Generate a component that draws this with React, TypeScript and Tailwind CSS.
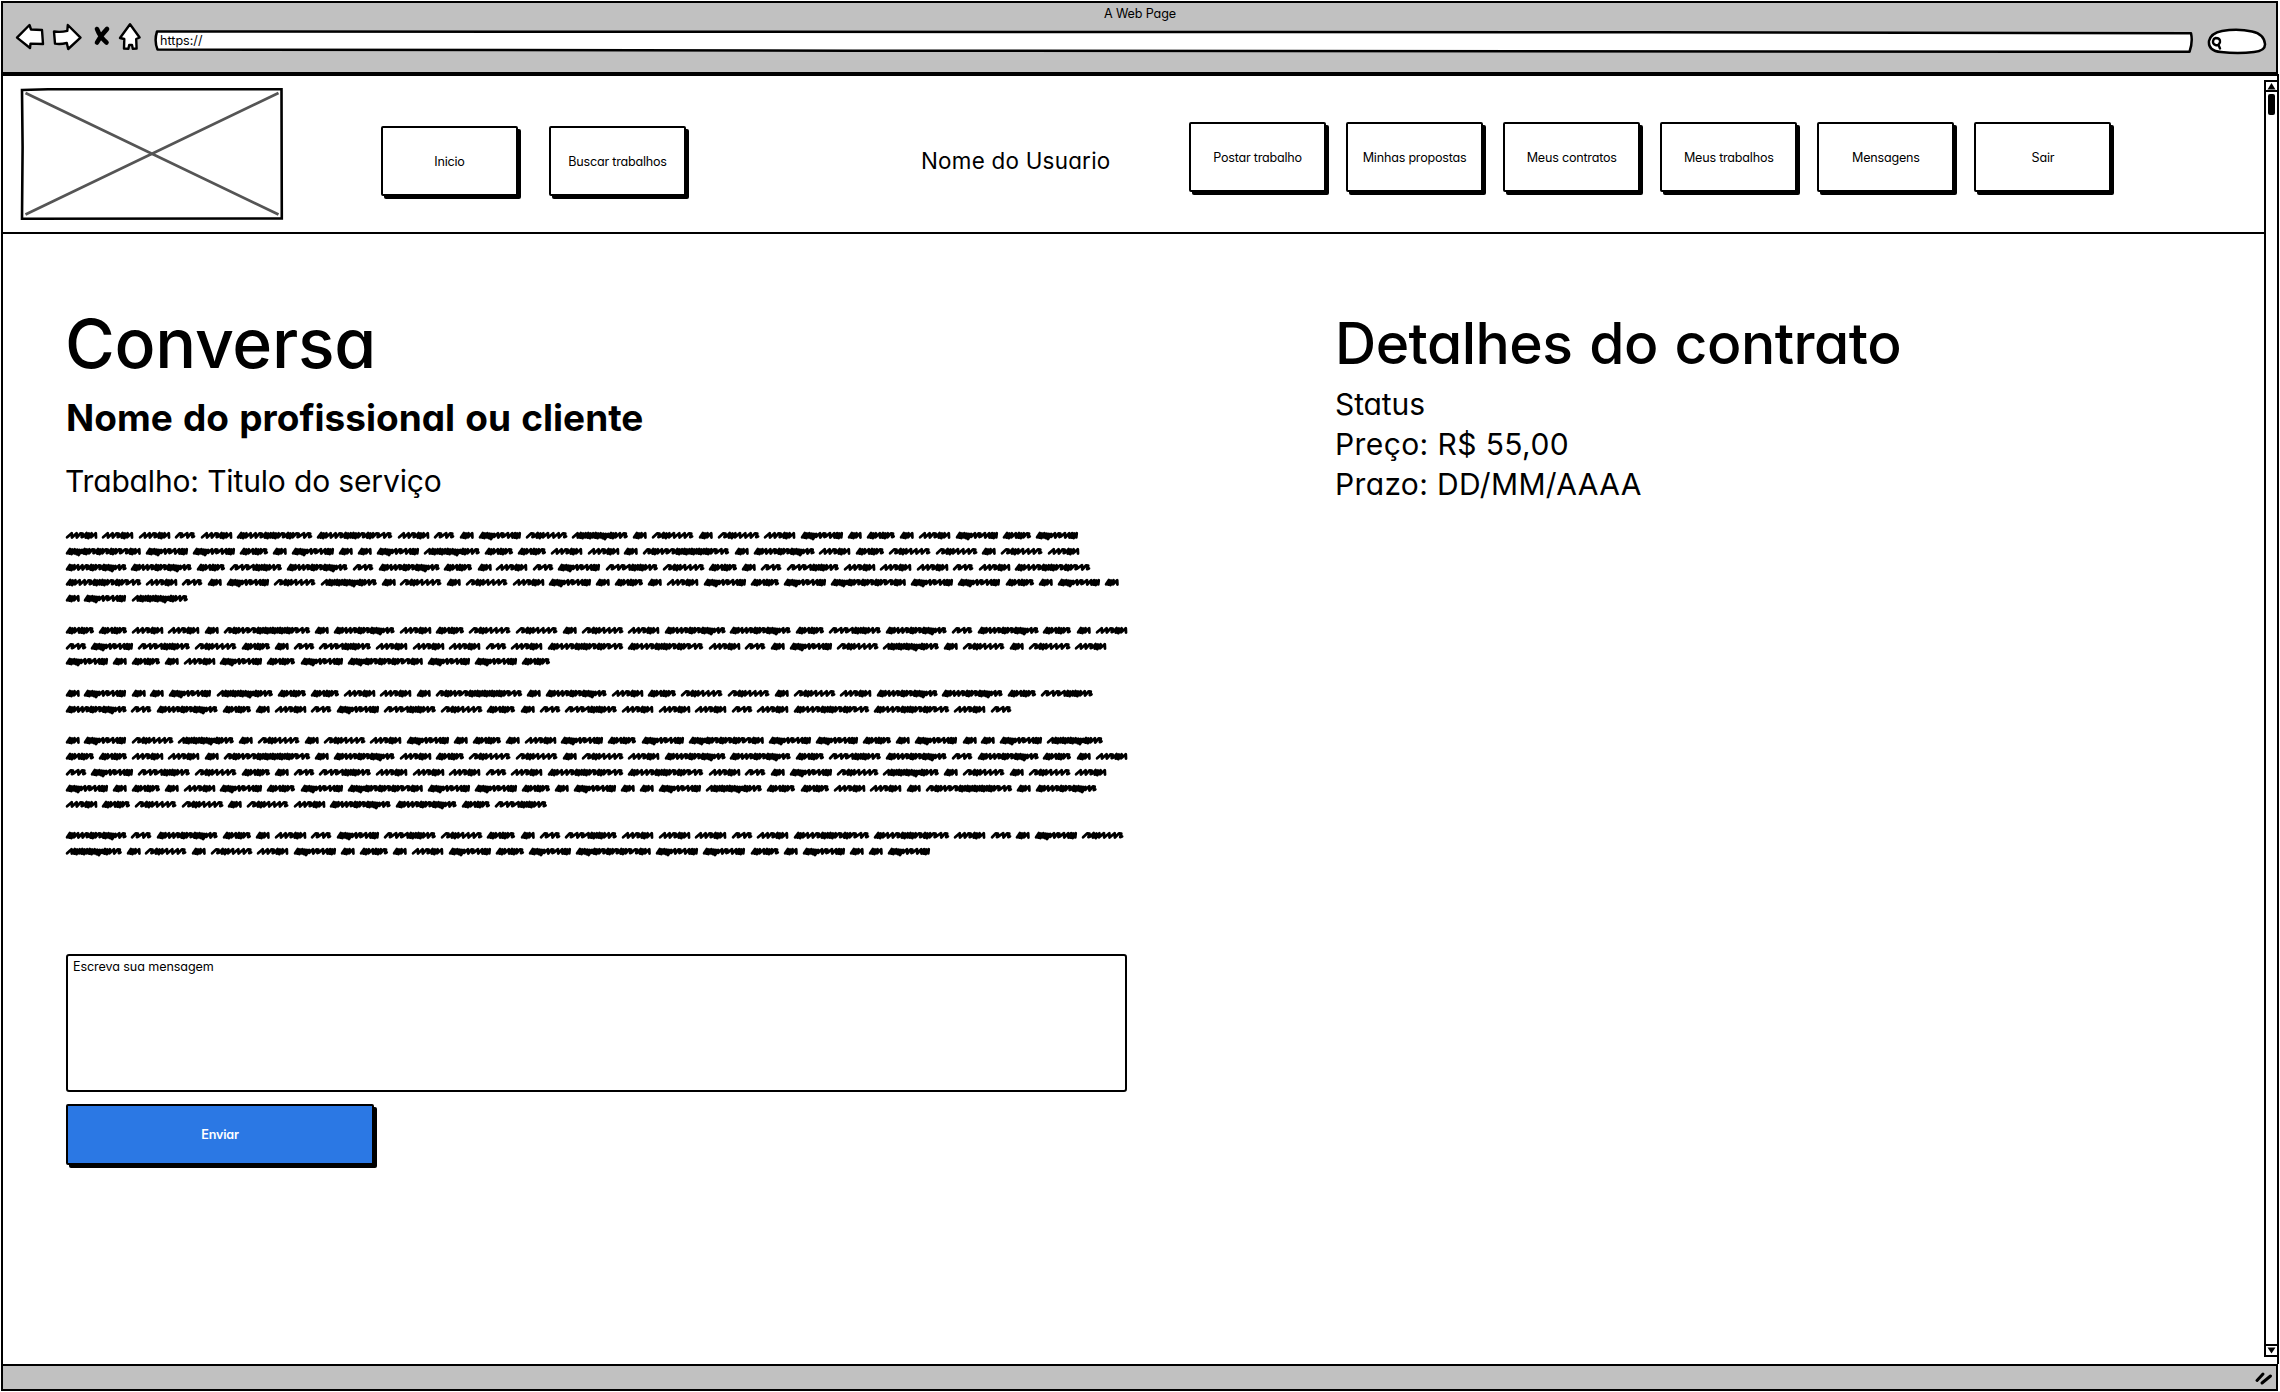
type WordKind = "A" | "B" | "C" | "D" | "E" | "F" | "G" | "H" | "I" | "J" | "K" | "L";

/* Each scribbled word: its ink width and the pen strokes that make it up. */
const WORDS: Record<WordKind, { width: number; strokes: string }> = {
  A: { width: 13.9, strokes: "ui" },
  B: { width: 20.5, strokes: "rir" },
  C: { width: 28.2, strokes: "uiur" },
  D: { width: 31.5, strokes: "iirui" },
  E: { width: 42.2, strokes: "uqiriiu" },
  F: { width: 41.6, strokes: "ruiiir" },
  G: { width: 52, strokes: "ririuuir" },
  H: { width: 56, strokes: "iuuuquir" },
  I: { width: 60.8, strokes: "uiiruruqir" },
  J: { width: 75.4, strokes: "uiiruururir" },
  K: { width: 75, strokes: "uqurururrui" },
  L: { width: 86.3, strokes: "ruirruuuuurir" },
};

const PARAGRAPHS: string[][] = [
  ["DDDBDJJDBAEFHAFAFDEACADECE", "KEECAEAAEHCCDDALAIDCFFAFD", "IICGIBICADBEGFCABGDDDBDJ", "JDBAEFHAFAFDEACADECEKEECAEA", "AEH"],
  ["CCDDALAIDCFFAFDIICGIBICAD", "BEGFCABGDDDBDJJDBAEFHAFAFD", "EACADECEKEEC"],
  ["AEAAEHCCDDALAIDCFFAFDIICG", "IBICADBEGFCABGDDDBDJJDB"],
  ["AEFHAFAFDEACADECEKEECAEAAEH", "CCDDALAIDCFFAFDIICGIBICAD", "BEGFCABGDDDBDJJDBAEFHAFAFD", "EACADECEKEECAEAAEHCCDDALAI", "DCFFAFDIICG"],
  ["IBICADBEGFCABGDDDBDJJDBAEF", "HAFAFDEACADECEKEECAEAAE"],
];

const STROKES: Record<string, [number, number][]> = {
  i: [[3.8, -2.3], [0.2, 2]],
  u: [[2.6, -2.4], [-0.6, 2.2], [2.6, -1.9], [-0.6, 2.6], [2.8, -2.2], [-0.4, 1.8]],
  q: [[2.6, -1.8], [-0.6, 2.6], [2.6, -1.6], [-0.8, 3.6], [3, -1.6], [-0.2, 1.4]],
  r: [[3.2, -2.2], [1.6, -1.8], [-0.8, 1.6], [1.4, 0.9]],
};

function scribblePath(kind: WordKind) {
  const { width, strokes } = WORDS[kind];
  let x = 0;
  const points: [number, number][] = [[0, 1.8]];
  for (const s of strokes) for (const [dx, y] of STROKES[s]) points.push([(x += dx), y]);
  const k = (width - 2.6) / Math.max(...points.map((p) => p[0]));
  return "M" + points.map(([px, py]) => `${(1.1 + px * k).toFixed(2)} ${(7.5 + py).toFixed(2)}`).join("L");
}

const PATHS = Object.fromEntries((Object.keys(WORDS) as WordKind[]).map((k) => [k, scribblePath(k)])) as Record<WordKind, string>;

function ScribbleLine({ words }: { words: string }) {
  return (
    <div className="flex h-[15.8px] gap-[5px]">
      {([...words] as WordKind[]).map((kind, i) => (
        <svg key={i} width={WORDS[kind].width} height="15.8" className="shrink-0 overflow-visible" fill="none" stroke="#000" strokeWidth="2.8" strokeLinecap="round" strokeLinejoin="round">
          <path d={PATHS[kind]} />
        </svg>
      ))}
    </div>
  );
}

function NavButton({ label }: { label: string }) {
  return (
    <button className="flex h-[70px] w-[137px] shrink-0 items-center justify-center rounded-[2px] border-2 border-black bg-white pt-[2px] text-[12.6px] tracking-[-0.22px] whitespace-nowrap shadow-[3px_3px_0_#000]">
      {label}
    </button>
  );
}

function BrowserIcons() {
  return (
    <svg width="130" height="30" className="mt-[19px] ml-[12px] shrink-0" viewBox="15 22 130 30" fill="#fff" stroke="#000" strokeWidth="2.4" strokeLinejoin="round" strokeLinecap="round">
      <path d="M17 37.6 L29.5 25 L31 29.5 L42 30 L43 44 L30.5 43.6 L30 48 Z" />
      <path d="M54 31.5 Q61 32.5 67.3 30.8 L67.8 25 L80.5 37.7 L68.2 49 L66.8 43 Q60 44.6 55 43.6 Z" />
      <path d="M97 29 Q100 37 106.5 42.5 M107 29 Q101 35 97 42.5" fill="none" strokeWidth="4.6" />
      <path d="M130 24.3 L139.6 37.5 L136.2 39 L136.6 48.5 L132.8 48.8 L132 45 L129.2 45 L128.4 48.8 L124 48.5 L124.3 39 L120 38 Z" />
    </svg>
  );
}

function TitleBar() {
  return (
    <div className="relative h-[73px] w-[2277px] border-2 border-black bg-[#c1c1c1]">
      <div className="h-5 pt-[3px] pl-px text-center text-[12.6px] leading-[16px] tracking-[-0.15px]">A Web Page</div>
      <div className="-mt-5 flex h-[68px]">
        <BrowserIcons />
        <div className="relative mt-[27px] ml-[8px] h-[24px] w-[2041px]">
          <svg className="absolute inset-0" width="2041" height="24" fill="#fff" stroke="#000" strokeWidth="2.5" strokeLinejoin="round">
            <path d="M4 1.5 L1500 2.3 L2038 3.2 Q2040 12 2036.5 21.8 L700 20.7 L4.5 19.5 Q1 11 4 1.5 Z" />
          </svg>
          <span className="absolute top-[2px] left-[7px] text-[12.6px] leading-[17px]">https://</span>
        </div>
        <svg width="62" height="28" className="mt-[24px] ml-[12px] shrink-0" fill="#fff" stroke="#000" strokeWidth="2.5" strokeLinecap="round">
          <path d="M3 14 Q5 6 16 4 Q32 1.5 46 4.5 Q58 7 59 17 Q59.5 24 48 25 Q32 27 15 25 Q2 24 3 14 Z" />
          <path d="M9.5 11 Q14.5 11 14 15 Q13 19 9.5 18 Q6.5 17 7 14 Q7.5 11.5 9.5 11 Z M12.5 18 L14 21.5" strokeWidth="2.4" />
        </svg>
      </div>
    </div>
  );
}

function Scrollbar() {
  return (
    <div className="flex h-[1277px] w-[15px] flex-col items-center border-2 border-black bg-white">
      <div className="flex h-[10px] w-full shrink-0 items-center justify-center border-b-2 border-black">
        <svg width="9" height="7">
          <path d="M4.5 0 L8.5 6.5 L0.5 6.5 Z" />
        </svg>
      </div>
      <div className="mt-[2px] h-[21px] w-[7.5px] shrink-0 rounded-[2px] bg-black" />
      <div className="mt-auto flex h-[11px] w-full shrink-0 items-center justify-center border-t-2 border-black">
        <svg width="9" height="7">
          <path d="M0.5 0.5 L8.5 0.5 L4.5 6.5 Z" />
        </svg>
      </div>
    </div>
  );
}

function Header() {
  return (
    <header className="flex h-[158px] w-[2265px] border-b-[2.5px] border-black">
      <svg width="264" height="134" className="mt-[11px] ml-[17px] shrink-0" fill="none" strokeWidth="2.6">
        <path d="M5.5 6 L258.5 127.5 M258.5 6 L5.5 127.5" stroke="#555" strokeWidth="2.8" />
        <path d="M2 3 L28 2.3 L261.5 2.3 L261.8 131.5 L2 131.8 L2.6 60 Z" stroke="#000" />
      </svg>
      <nav className="mt-[50px] ml-[97px] flex gap-[31px]">
        <NavButton label="Inicio" />
        <NavButton label="Buscar trabalhos" />
      </nav>
      <div className="mt-[69px] ml-[235px] w-[200px] text-[22.4px] leading-[32px] tracking-[0.25px] whitespace-nowrap">Nome do Usuario</div>
      <nav className="mt-[46px] ml-[68px] flex gap-[20.1px]">
        {["Postar trabalho", "Minhas propostas", "Meus contratos", "Meus trabalhos", "Mensagens", "Sair"].map((l) => (
          <NavButton key={l} label={l} />
        ))}
      </nav>
    </header>
  );
}

export default function App() {
  return (
    <div className="h-[1392px] w-[2280px] overflow-hidden bg-white font-['Inter',sans-serif] text-black [font-feature-settings:'cv11']">
      <div className="ml-px flex h-[1391px] flex-col pt-[1px]">
        <TitleBar />
        <div className="relative h-[1290px] w-[2278px] border-t-2 border-r-2 border-l-2 border-black">
          <Header />
          <main className="flex">
            <section className="w-[1272px] pt-[69px] pl-[62px]">
              <h1 className="text-[68px] leading-[80px] font-medium tracking-[-0.3px]">Conversa</h1>
              <h2 className="mt-[11px] ml-px text-[37px] leading-[48px] font-bold [word-spacing:1.5px]">Nome do profissional ou cliente</h2>
              <p className="mt-[19px] text-[30px] leading-[40px] tracking-[-0.15px]">Trabalho: Titulo do serviço</p>
              <div className="mt-[27px] flex flex-col gap-[15.8px] pl-[0.5px]">
                {PARAGRAPHS.map((lines, i) => (
                  <div key={i}>
                    {lines.map((words, j) => (
                      <ScribbleLine key={j} words={words} />
                    ))}
                  </div>
                ))}
              </div>
              <div className="mt-[94px] ml-px h-[138px] w-[1061px] rounded-[3px] border-2 border-black px-[5px] pt-[2px] text-[12.6px] leading-[18px] tracking-[-0.1px]">
                Escreva sua mensagem
              </div>
              <button className="mt-[12px] ml-px flex h-[61px] w-[308px] items-center justify-center rounded-[2px] border-2 border-black bg-[#2b78e4] pt-[2px] text-[12.6px] font-semibold tracking-[-0.2px] text-white shadow-[3px_3px_0_#000]">
                Enviar
              </button>
            </section>
            <section className="pt-[75px] pl-[60px]">
              <h1 className="text-[57px] leading-[70px] font-medium tracking-[-0.5px] [word-spacing:2px]">Detalhes do contrato</h1>
              <div className="mt-[5px] text-[30px] leading-[40px]">
                <p className="tracking-[-0.1px]">Status</p>
                <p className="tracking-[0.4px]">Preço: R$ 55,00</p>
                <p className="tracking-[0.35px]">Prazo: DD/MM/AAAA</p>
              </div>
            </section>
          </main>
          <div className="absolute top-[4px] -right-[2px]">
            <Scrollbar />
          </div>
        </div>
        <footer className="relative h-[27px] w-[2277px] border-2 border-black bg-[#c1c1c1]">
          <svg className="absolute right-[2px] bottom-[3px]" width="20" height="16" fill="none" stroke="#000" strokeWidth="3" strokeLinecap="round">
            <path d="M3 10.500 L9 4 M8 13 L16.500 6" />
          </svg>
        </footer>
      </div>
    </div>
  );
}
